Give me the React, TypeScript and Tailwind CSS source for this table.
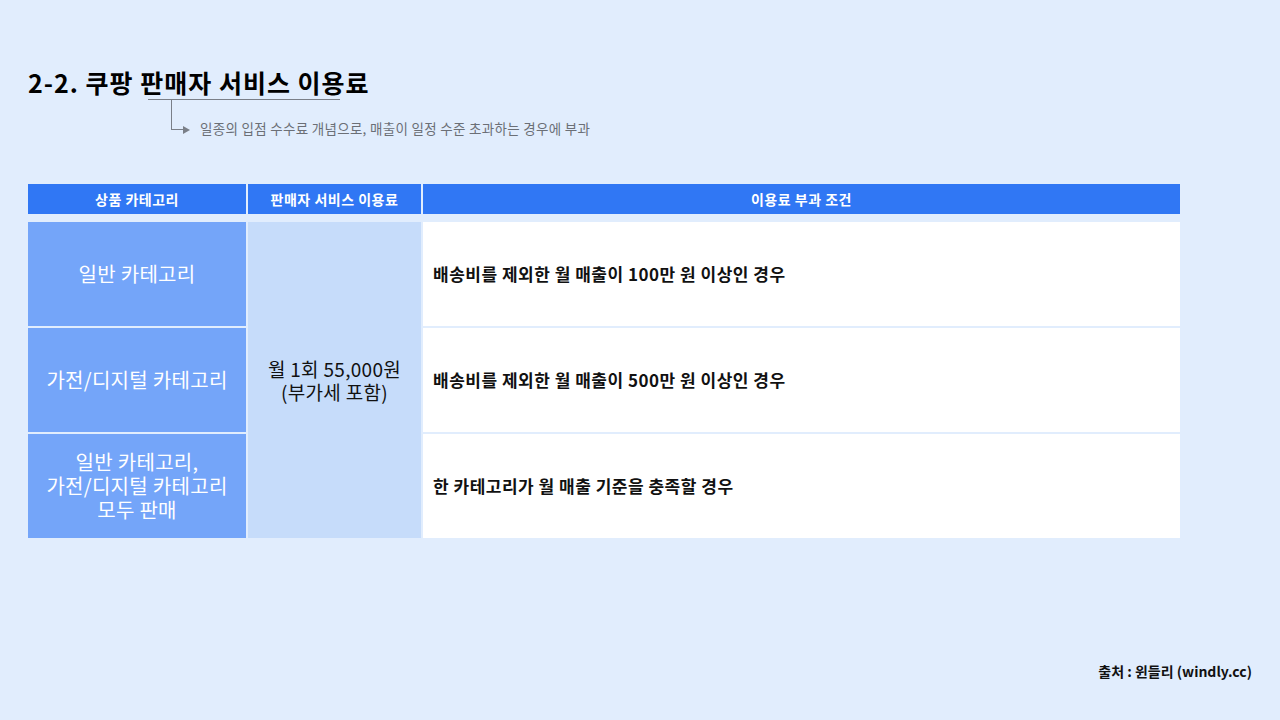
const font = "font-['Noto_Sans_CJK_KR','Noto_Sans',sans-serif]";

const categories = [
  ["일반 카테고리"],
  ["가전/디지털 카테고리"],
  ["일반 카테고리,", "가전/디지털 카테고리", "모두 판매"],
];

const conditions = [
  "배송비를 제외한 월 매출이 100만 원 이상인 경우",
  "배송비를 제외한 월 매출이 500만 원 이상인 경우",
  "한 카테고리가 월 매출 기준을 충족할 경우",
];

export default function App() {
  return (
    <div className={`${font} w-[1280px] h-[720px] bg-[#e1edfd] flex flex-col px-[28px] pt-[66px] text-black`}>
      <h1 className="text-[25px] leading-[32px] font-bold tracking-[1px]">2-2. 쿠팡 판매자 서비스 이용료</h1>
      <div className="ml-[120px] w-[192px] h-px bg-[#7a7f88] mt-[1px]" />
      <div className="flex items-end ml-[143px]">
        <div className="w-[12px] h-[30px] border-l border-b border-[#7a7f88]" />
        <div className="w-0 h-0 border-y-[4px] border-y-transparent border-l-[7px] border-l-[#7a7f88] mb-[-3.5px]" />
        <span className="ml-[10px] text-[13.5px] leading-[16px] tracking-[0.3px] text-[#6b6f76] mb-[-6px]">
          일종의 입점 수수료 개념으로, 매출이 일정 수준 초과하는 경우에 부과
        </span>
      </div>

      <div className="mt-[54px] w-[1152px]">
        <div className="grid grid-cols-[218px_173px_1fr] gap-x-[2px] h-[30px] text-white text-[14px] tracking-[0.5px] font-bold">
          <div className="bg-[#3077f4] flex items-center justify-center">상품 카테고리</div>
          <div className="bg-[#3077f4] flex items-center justify-center">판매자 서비스 이용료</div>
          <div className="bg-[#3077f4] flex items-center justify-center">이용료 부과 조건</div>
        </div>
        <div className="mt-[8px] grid grid-cols-[218px_173px_1fr] grid-rows-[104px_104px_104px] gap-x-[2px] gap-y-[2px]">
          {categories.map((lines, i) => (
            <div
              key={i}
              className="bg-[#74a5f9] text-white text-[20px] leading-[24px] tracking-[0.3px] flex flex-col items-center justify-center text-center"
              style={{ gridColumn: 1, gridRow: i + 1 }}
            >
              {lines.map((l) => (
                <span key={l}>{l}</span>
              ))}
            </div>
          ))}
          <div className="col-start-2 row-start-1 row-span-3 bg-[#c6dcfa] flex flex-col items-center justify-center text-[19px] leading-[23px] tracking-[0.3px] text-[#111]">
            <span>월 1회 55,000원</span>
            <span>(부가세 포함)</span>
          </div>
          {conditions.map((c, i) => (
            <div
              key={c}
              className="bg-white flex items-center pl-[10px] text-[17px] tracking-[0.5px] font-bold text-[#111]"
              style={{ gridColumn: 3, gridRow: i + 1 }}
            >
              {c}
            </div>
          ))}
        </div>
      </div>

      <div className="mt-auto mb-[38px] self-end text-[14px] font-bold text-[#111]">출처 : 윈들리 (windly.cc)</div>
    </div>
  );
}
